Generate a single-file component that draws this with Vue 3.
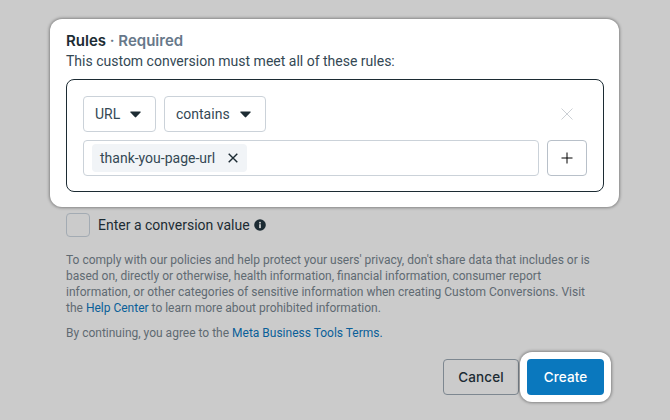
<template>
  <div class="page">
    <section class="rules-card">
      <div class="rules-title">Rules <span class="required">· Required</span></div>
      <p class="rules-desc">This custom conversion must meet all of these rules:</p>
      <div class="rule-box">
        <div class="rule-row">
          <button class="select select-url">
            URL
            <svg class="caret" viewBox="0 0 11 7" width="11" height="7"><path d="M1 0.5H10C10.6 0.5 10.9 1.1 10.5 1.6L6.2 6.1C5.8 6.5 5.2 6.5 4.8 6.1L0.5 1.6C0.1 1.1 0.4 0.5 1 0.5Z" fill="#1c2b33"/></svg>
          </button>
          <button class="select select-op">
            contains
            <svg class="caret" viewBox="0 0 11 7" width="11" height="7"><path d="M1 0.5H10C10.6 0.5 10.9 1.1 10.5 1.6L6.2 6.1C5.8 6.5 5.2 6.5 4.8 6.1L0.5 1.6C0.1 1.1 0.4 0.5 1 0.5Z" fill="#1c2b33"/></svg>
          </button>
          <button class="remove-rule" aria-label="Remove">
            <svg viewBox="0 0 12 12" width="12" height="12"><path d="M0.5 0.5L11.5 11.5M11.5 0.5L0.5 11.5" stroke="#ccd0d5" stroke-width="1" fill="none"/></svg>
          </button>
        </div>
        <div class="value-row">
          <div class="value-input">
            <span class="token">
              thank-you-page-url
              <svg viewBox="0 0 10 10" width="10" height="10"><path d="M0.7 0.7L9.3 9.3M9.3 0.7L0.7 9.3" stroke="#1c2b33" stroke-width="1.4" fill="none"/></svg>
            </span>
          </div>
          <button class="add-btn" aria-label="Add">
            <svg viewBox="0 0 12 12" width="12" height="12"><path d="M6 0.5V11.5M0.5 6H11.5" stroke="#000" stroke-width="1" fill="none"/></svg>
          </button>
        </div>
      </div>
    </section>

    <div class="value-check">
      <span class="checkbox"></span>
      <span>Enter a conversion value</span>
      <svg class="info" viewBox="0 0 12 12" width="12" height="12">
        <circle cx="6" cy="6" r="5.8" fill="#1c2b33"/>
        <rect x="5.1" y="5.2" width="1.8" height="3.9" fill="#cbcbcb"/>
        <rect x="5.1" y="2.9" width="1.8" height="1.6" fill="#cbcbcb"/>
      </svg>
    </div>

    <div class="legal">
      <div>
        To comply with our policies and help protect your users' privacy, don't share data that includes or is
        based on, directly or otherwise, health information, financial information, consumer report
        information, or other categories of sensitive information when creating Custom Conversions. Visit
      </div>
      <div>the <a>Help Center</a> to learn more about prohibited information.</div>
    </div>
    <p class="legal terms">By continuing, you agree to the <a>Meta Business Tools Terms.</a></p>

    <div class="actions">
      <button class="btn btn-cancel">Cancel</button>
      <div class="create-halo">
        <button class="btn btn-create">Create</button>
      </div>
    </div>
  </div>
</template>

<script setup>
</script>

<style>
html, body {
  margin: 0;
  background: #cbcbcb;
}
</style>

<style scoped>
.page {
  width: 670px;
  height: 420px;
  box-sizing: border-box;
  padding-top: 19px;
  overflow: hidden;
  background: #cbcbcb;
  font-family: Roboto, "Liberation Sans", sans-serif;
  color: #1c2b33;
}

.rules-card {
  width: 569px;
  height: 188px;
  box-sizing: border-box;
  margin-left: 50px;
  padding: 13px 15px 0 16px;
  background: #fff;
  border-radius: 12px;
  box-shadow: 0 0 3px 1px rgba(0, 0, 0, 0.35);
}

.rules-title {
  font-family: Inter, "Liberation Sans", sans-serif;
  font-size: 15px;
  font-weight: 600;
  line-height: 18px;
}

.required {
  color: #67788a;
}

.rules-desc {
  margin: 2px 0 0;
  font-size: 14px;
  line-height: 18px;
  color: #344854;
}

.rule-box {
  width: 538px;
  height: 113px;
  box-sizing: border-box;
  margin-top: 9px;
  padding: 16px;
  border: 1px solid #1c2b33;
  border-radius: 8px;
}

.rule-row,
.value-row {
  display: flex;
  gap: 8px;
}

.value-row {
  margin-top: 8px;
}

.select {
  display: flex;
  align-items: center;
  justify-content: space-between;
  height: 36px;
  box-sizing: border-box;
  padding: 0 14px 0 11px;
  background: #fff;
  border: 1px solid #cbd2d9;
  border-radius: 4px;
  font: 14px Roboto, "Liberation Sans", sans-serif;
  color: #344854;
}

.select-url {
  width: 73px;
}

.select-op {
  width: 102px;
}

.caret {
  flex-shrink: 0;
}

.remove-rule {
  display: flex;
  align-items: center;
  justify-content: center;
  width: 40px;
  height: 36px;
  margin-left: auto;
  padding: 0;
  background: none;
  border: none;
}

.value-input {
  display: flex;
  align-items: center;
  width: 456px;
  height: 36px;
  box-sizing: border-box;
  padding-left: 8px;
  background: #fff;
  border: 1px solid #cbd2d9;
  border-radius: 4px;
}

.token {
  display: flex;
  align-items: center;
  gap: 13px;
  height: 28px;
  padding: 0 9px 0 8px;
  background: #f1f4f7;
  border-radius: 4px;
  font-size: 14px;
  color: #344854;
}

.add-btn {
  display: flex;
  align-items: center;
  justify-content: center;
  width: 40px;
  height: 36px;
  padding: 0;
  background: #fff;
  border: 1px solid #b8c0c9;
  border-radius: 4px;
}

.value-check {
  display: flex;
  align-items: center;
  height: 24px;
  margin: 6px 0 0 66px;
  font-size: 14px;
  color: #1c2b33;
}

.checkbox {
  width: 24px;
  height: 24px;
  box-sizing: border-box;
  margin-right: 8px;
  border: 1px solid #a3abb3;
  border-radius: 4px;
}

.info {
  margin-left: 4px;
}

.legal {
  width: 530px;
  margin: 15px 0 0 66px;
  font-size: 12px;
  line-height: 16px;
  color: #5f6a72;
}

.legal a {
  color: #0a5f99;
}

.terms {
  margin-top: 9px;
  margin-bottom: 0;
}

.actions {
  display: flex;
  align-items: center;
  justify-content: flex-end;
  margin: 11px 59px 0 0;
}

.btn {
  width: 76px;
  height: 36px;
  box-sizing: border-box;
  border-radius: 4px;
  font: 500 13.5px Inter, "Liberation Sans", sans-serif;
  letter-spacing: 0.1px;
}

.btn-cancel {
  background: transparent;
  border: 1px solid #7d8790;
  color: #1c2b33;
}

.create-halo {
  margin-left: 1px;
  padding: 7px;
  background: #fff;
  border-radius: 12px;
  box-shadow: 0 0 3px 1px rgba(0, 0, 0, 0.35);
}

.btn-create {
  display: block;
  width: 77px;
  background: #0a78be;
  border: none;
  color: #fff;
}
</style>
